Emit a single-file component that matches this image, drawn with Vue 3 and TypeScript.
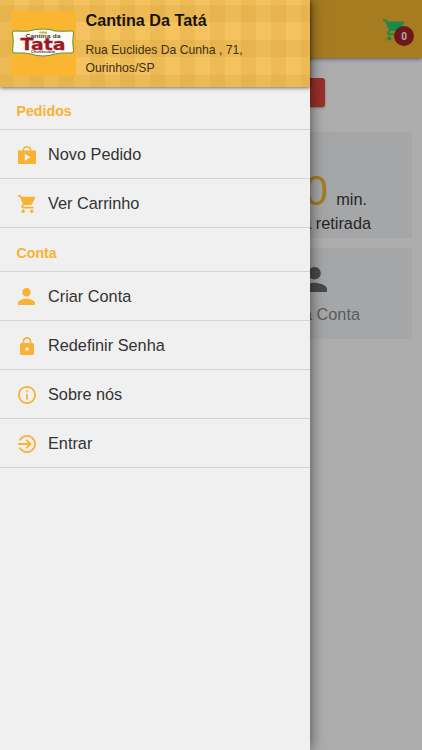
<script setup lang="ts">
interface MenuItem {
  label: string
  icon: string
  viewBox: string
  width: number
  height: number
}

interface MenuGroup {
  title: string
  items: MenuItem[]
}

const cartPath =
  'M7 18c-1.1 0-1.99.9-1.99 2S5.9 22 7 22s2-.9 2-2-.9-2-2-2zM1 2v2h2l3.6 7.59-1.35 2.45c-.16.28-.25.61-.25.96 0 1.1.9 2 2 2h12v-2H7.42c-.14 0-.25-.11-.25-.25l.03-.12.9-1.63h7.45c.75 0 1.41-.41 1.75-1.03l3.58-6.49c.08-.14.12-.31.12-.48 0-.55-.45-1-1-1H5.21l-.94-2H1zm16 16c-1.1 0-1.99.9-1.99 2s.89 2 1.99 2 2-.9 2-2-.9-2-2-2z'
const personPath =
  'M12 12c2.21 0 4-1.79 4-4s-1.79-4-4-4-4 1.79-4 4 1.79 4 4 4zm0 2c-2.67 0-8 1.34-8 4v2h16v-2c0-2.66-5.33-4-8-4z'

const groups: MenuGroup[] = [
  {
    title: 'Pedidos',
    items: [
      {
        label: 'Novo Pedido',
        viewBox: '2 1 20 20',
        width: 18,
        height: 18,
        icon: 'M17 6C17 3.2 14.8 1 12 1S7 3.2 7 6H2v15h20V6zM12 2.700c1.900 0 3.300 1.400 3.300 3.300H8.700c0-1.900 1.400-3.300 3.300-3.300zM9.500 17.500v-8l6.500 4z',
      },
      { label: 'Ver Carrinho', viewBox: '1 2 21 20', width: 18, height: 18, icon: cartPath },
    ],
  },
  {
    title: 'Conta',
    items: [
      { label: 'Criar Conta', viewBox: '4 4 16 16', width: 17, height: 17, icon: personPath },
      {
        label: 'Redefinir Senha',
        viewBox: '4 1 16 21',
        width: 14,
        height: 18,
        icon: 'M18 8h-1V6c0-2.760-2.240-5-5-5S7 3.240 7 6v2H6c-1.100 0-2 .9-2 2v10c0 1.100.9 2 2 2h12c1.100 0 2-.9 2-2V10c0-1.100-.9-2-2-2zm-6 9c-1.100 0-2-.9-2-2s.9-2 2-2 2 .9 2 2-.9 2-2 2zm3.100-9H8.900V6c0-1.710 1.390-3.100 3.100-3.100s3.100 1.390 3.100 3.100v2z',
      },
      {
        label: 'Sobre nós',
        viewBox: '2 2 20 20',
        width: 18,
        height: 18,
        icon: 'M11 17h2v-6h-2v6zm1-15C6.480 2 2 6.480 2 12s4.480 10 10 10 10-4.480 10-10S17.520 2 12 2zm0 18c-4.410 0-8-3.590-8-8s3.590-8 8-8 8 3.590 8 8-3.590 8-8 8zM11 9h2V7h-2v2z',
      },
      {
        label: 'Entrar',
        viewBox: '2 2 20 20',
        width: 18,
        height: 18,
        icon: 'M12 2C7.800 2 4.200 4.600 2.700 8.200h2.200A8 8 0 1 1 4.900 15.800H2.700A10 10 0 1 0 12 2zM10.600 15.900l1.400 1.400 5.300-5.300L12 6.700l-1.400 1.400 2.800 2.900H2v2h11.400z',
      },
    ],
  },
]
</script>

<template>
  <div class="screen">
    <div class="page">
      <header class="toolbar">
        <div class="cart">
          <svg viewBox="1 2 21 20" width="22" height="22"><path :d="cartPath" /></svg>
          <span class="badge">0</span>
        </div>
      </header>
      <main class="content">
        <div class="status"></div>
        <section class="card time">
          <p class="minutes"><b>30</b><span>min.</span></p>
          <p>para retirada</p>
        </section>
        <section class="card account">
          <svg viewBox="4 4 16 16" width="25" height="25"><path :d="personPath" /></svg>
          <p>Minha Conta</p>
        </section>
      </main>
    </div>

    <aside class="drawer">
      <header class="brand">
        <div class="logo">
          <svg viewBox="0 0 65 65" width="65" height="65">
            <path d="M1.500 21Q1.500 20 4 20Q14 20.500 18 20Q24 18 32 18Q40 18 44 20Q50 20.500 60 20Q62.500 20 62.500 21Q61 31 62.500 40Q62.500 42 60 42Q50 41.500 44 43Q38 45 32 45Q26 45 20 43Q14 41.500 4 42Q1.500 42 1.500 40Q3 31 1.500 21Z" fill="#fffdf8" stroke="#5c9140" stroke-width="1" />
            <path d="M28 22l1-2 2 1.500 1-2 2 2 2-1.500v3z" fill="#d5a34a" />
            <text x="32" y="26.500" textLength="35" lengthAdjust="spacingAndGlyphs" class="logo-top">Cantina da</text>
            <text x="32" y="38.500" textLength="45" lengthAdjust="spacingAndGlyphs" class="logo-name">Tata</text>
            <text x="32" y="42" textLength="24" lengthAdjust="spacingAndGlyphs" class="logo-sub">Churrascaria</text>
          </svg>
        </div>
        <div class="brand-text">
          <h1>Cantina Da Tatá</h1>
          <p>Rua Euclides Da Cunha , 71, Ourinhos/SP</p>
        </div>
      </header>
      <nav>
        <section v-for="group in groups" :key="group.title">
          <h2>{{ group.title }}</h2>
          <a v-for="item in group.items" :key="item.label" class="item">
            <span class="icon">
              <svg :viewBox="item.viewBox" :width="item.width" :height="item.height" preserveAspectRatio="none">
                <path :d="item.icon" fill-rule="evenodd" />
              </svg>
            </span>
            {{ item.label }}
          </a>
        </section>
      </nav>
    </aside>
  </div>
</template>

<style>
body {
  margin: 0;
  overflow: hidden;
}
</style>

<style scoped>
* {
  box-sizing: border-box;
}
.screen {
  position: relative;
  height: 750px;
  overflow: hidden;
  font-family: 'Liberation Sans', Arial, sans-serif;
  color: #2b2b2b;
}
h1, h2, p {
  margin: 0;
}
svg {
  display: block;
}
.page {
  height: 100%;
  background: #adadad;
}
.toolbar {
  display: flex;
  justify-content: flex-end;
  height: 58px;
  padding: 19px 17px 0 0;
  background: #a77c20;
  box-shadow: 0 1px 4px rgba(0, 0, 0, 0.5);
}
.cart {
  position: relative;
  width: 22px;
  height: 22px;
  fill: #178a4c;
}
.badge {
  position: absolute;
  left: 11px;
  top: 7px;
  width: 20px;
  height: 20px;
  border-radius: 50%;
  background: #6c171b;
  color: #b9a9aa;
  font: bold 10px/21px Roboto, sans-serif;
  text-align: center;
}
.content {
  display: flex;
  flex-direction: column;
  padding: 20px 10px 0;
}
.status {
  width: 228px;
  height: 29px;
  margin: 0 auto 25px;
  border-radius: 3px;
  background: #9b3029;
  box-shadow: 0 1px 2px rgba(0, 0, 0, 0.3);
}
.card {
  background: #a5a6a8;
  font-size: 16.300px;
}
.time {
  height: 106px;
  padding: 35px 41px 0 0;
  text-align: right;
  color: #252525;
  line-height: 22px;
}
.minutes {
  height: 45px;
  padding-right: 4px;
  line-height: 47px;
}
.minutes b {
  margin-right: 8px;
  font-size: 42px;
  font-weight: 400;
  color: #a77c20;
}
.account {
  height: 91px;
  margin-top: 10px;
  padding: 19px 52px 0 0;
  text-align: right;
  color: #5b5b5b;
}
.account svg {
  margin: 0 33px 0 auto;
  fill: #494949;
}
.account p {
  margin-top: 12px;
  line-height: 21px;
}
.drawer {
  position: absolute;
  top: 0;
  left: 0;
  width: 310px;
  height: 100%;
  background: #f0f0f0;
  box-shadow: 0 0 14px rgba(0, 0, 0, 0.6);
}
.brand {
  position: relative;
  display: flex;
  height: 87px;
  padding: 11px 10px 0 11px;
  background:
    repeating-linear-gradient(90deg, rgba(201, 145, 40, 0.17) 0 15px, transparent 15px 30.200px) -1px 0,
    linear-gradient(180deg, transparent 5px, rgba(201, 145, 40, 0.17) 5px 22px, transparent 22px 40px, rgba(201, 145, 40, 0.17) 40px 57px, transparent 57px 75px, rgba(201, 145, 40, 0.17) 75px),
    #f4c35f;
  box-shadow: 0 1px 4px rgba(0, 0, 0, 0.55);
}
.logo {
  flex: none;
  width: 65px;
  height: 65px;
  background: #fab630;
}
.logo-top {
  font: bold 5.500px 'Liberation Sans', sans-serif;
  text-anchor: middle;
  fill: #463b2c;
}
.logo-name {
  font: bold 15px 'DejaVu Sans', sans-serif;
  text-anchor: middle;
  fill: #9d1826;
  stroke: #9d1826;
  stroke-width: 0.3px;
}
.logo-sub {
  font: bold 3px 'Liberation Sans', sans-serif;
  text-anchor: middle;
  fill: #55352e;
}
.brand-text {
  padding-left: 9.500px;
}
h1 {
  font-size: 16.200px;
  line-height: 18px;
  color: #171309;
}
.brand-text p {
  width: 190px;
  margin-top: 12px;
  font-size: 12.200px;
  line-height: 18px;
  color: #3c3017;
}
h2 {
  height: 43px;
  padding-left: 16.500px;
  border-bottom: 1px solid #d4d4d4;
  font-size: 14.200px;
  font-weight: bold;
  line-height: 48px;
  color: #f9b233;
}
section + section h2 {
  height: 44px;
  line-height: 51px;
}
.item {
  display: flex;
  align-items: center;
  height: 49px;
  border-bottom: 1px solid #d4d4d4;
  font-size: 16.300px;
  color: #333;
}
.icon {
  display: flex;
  justify-content: center;
  width: 19px;
  margin: 1px 12px 0 17px;
  fill: #f9b233;
}
</style>
